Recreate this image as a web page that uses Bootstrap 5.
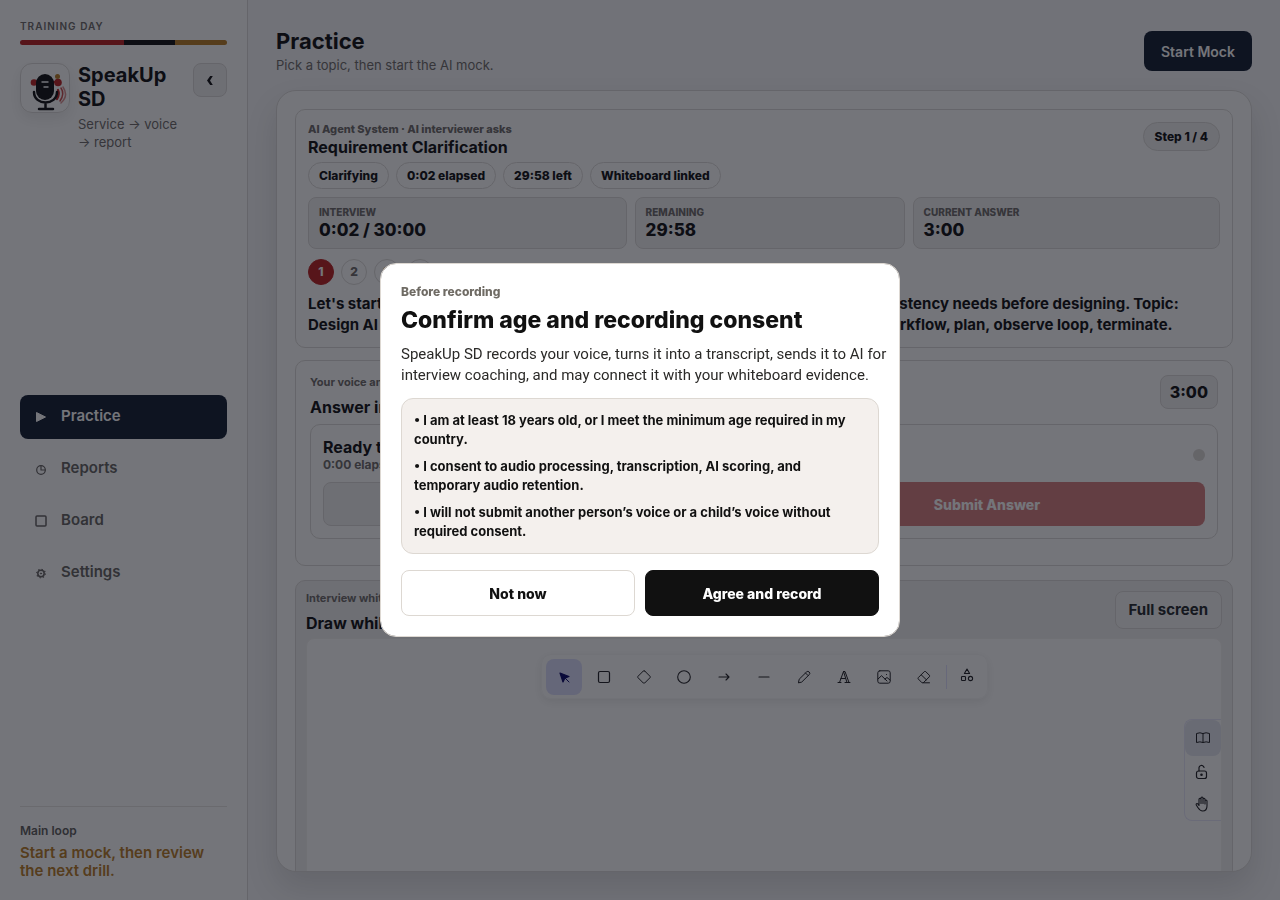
<!DOCTYPE html>
<html lang="en">
<head>
<meta charset="utf-8">
<meta name="viewport" content="width=device-width, initial-scale=1">
<title>SpeakUp SD – Practice</title>
<link href="https://cdn.jsdelivr.net/npm/bootstrap@5.3.0/dist/css/bootstrap.min.css" rel="stylesheet">
<style>
:root { --ink:#0a0a0c; --muted:#6b6866; --line:#dcdad8; --soft:#f1f0f1; --navy:#0d182d; --red:#b91c1c; --gold:#b7791f; }
body { font-family: Inter, "Liberation Sans", sans-serif; color: var(--ink); font-size: 13px; background:#f7f7f9; }
svg { display:block; }
.line-icon { fill:none; stroke:currentColor; stroke-linecap:round; stroke-linejoin:round; }
.app-shell { height:100vh; }
.side { width:248px; padding:20px; background:#fff; border-right:1px solid var(--line); }
.kicker { font-size:10px; line-height:12px; letter-spacing:1px; color:var(--muted); font-weight:600; }
.stripe { height:5px; }
.stripe .half { flex:2; background:var(--red); }
.stripe .dark { flex:1; background:var(--ink); }
.stripe .gold { flex:1; background:var(--gold); }
.brand-row { margin:18px 0 32px; }
.logo { width:50px; height:50px; border:1px solid var(--line); border-radius:12px; box-shadow:0 6px 14px rgba(0,0,0,.08); }
.brand { font-size:20px; line-height:24px; font-weight:700; margin:0; }
.brand-sub { font-size:13px; line-height:18px; color:var(--muted); margin-top:4px; }
.collapse-btn { width:34px; height:34px; border:1px solid var(--line); border-radius:8px; background:var(--soft); color:var(--ink); }
.side-nav { gap:8px; }
.side-nav .nav-link { height:44px; padding:0 14px; gap:13px; border-radius:8px; font-size:15px; font-weight:600; color:#625f5e; }
.side-nav .nav-link.active { background:var(--navy); color:#fff; }
.side-foot { border-top:1px solid #e6e4e2; padding-top:16px; }
.side-foot .cap { font-size:12px; line-height:16px; font-weight:600; color:#5c5a58; }
.side-foot .tip { font-size:15px; line-height:18px; font-weight:600; color:var(--gold); margin-top:5px; }
.main-col { padding:28px; }
.page-title { font-size:22px; line-height:26px; font-weight:700; margin:0; }
.page-sub { font-size:13px; line-height:18px; color:var(--muted); margin-top:2px; }
.btn-navy, .btn-navy:hover { background:var(--navy); color:#fff; height:40px; padding:0 17px; border:0; border-radius:8px; font-size:14px; font-weight:600; }
.stage { background:#fff; border:1px solid var(--line); border-radius:20px; padding:18px; box-shadow:0 16px 32px rgba(0,0,0,.12); overflow:hidden; }
.panel { border:1px solid var(--line); border-radius:10px; background:#fff; }
.label-sm { font-size:11px; line-height:14px; font-weight:700; color:var(--muted); }
.title-md { font-size:16px; line-height:20px; font-weight:700; margin:0; }
.question { padding:12px; margin-bottom:12px; }
.question .label-sm { font-weight:800; }
.question .title-md { line-height:22px; }
.chips { gap:7px; margin-top:4px; }
.chip { height:27px; padding:0 10px; border:1px solid var(--line); border-radius:14px; font-size:12px; font-weight:800; }
.chip-soft { height:29px; padding:0 11px; background:var(--soft); border-radius:15px; }
.stat { height:52px; padding:8px 10px; border:1px solid var(--line); border-radius:8px; background:var(--soft); }
.stat dt { font-size:10px; line-height:13px; font-weight:800; color:var(--muted); text-transform:uppercase; }
.stat dd { font-size:17px; line-height:22px; font-weight:800; margin:0; }
.steps { gap:7px; margin:10px 0 8px; }
.dot-step { width:26px; height:26px; border:1px solid var(--line); border-radius:50%; font-size:12px; font-weight:800; color:var(--muted); }
.dot-step.on { background:var(--red); border-color:var(--red); color:#fff; }
.prompt { font-size:15px; line-height:21px; font-weight:700; margin:0; }
.answer { padding:14px 14px 26px; margin-bottom:14px; }
.timer { height:34px; padding:0 9px; border:1px solid var(--line); border-radius:8px; background:var(--soft); font-size:16px; font-weight:800; }
.recorder { padding:12px; margin-top:7px; }
.recorder-head { margin-bottom:9px; }
.recorder .elapsed { font-size:12px; line-height:16px; }
.idle-dot { width:12px; height:12px; background:#dcd8d4; }
.act { height:44px; border-radius:8px; font-size:14px; font-weight:800; flex:1 1 0; }
.act-soft { background:var(--soft); border:1px solid var(--line); }
.act-red:disabled { background:var(--red); color:#fff; border:0; opacity:.57; }
.whiteboard { background:var(--soft); padding:10px; }
.whiteboard .title-md { margin-top:8px; }
.full-btn { height:38px; padding:0 13px; border:1px solid var(--line); border-radius:8px; font-size:15px; font-weight:700; background:#f6f6f6; }
.board { background:#fff; border:1px solid #f4f2f1; border-radius:8px; height:520px; padding-top:15px; margin-top:5px; }
.tools { height:45px; padding:4px; gap:4px; border-radius:10px; border:1px solid #f8f8f8; box-shadow:0 3px 10px rgba(0,0,0,.08); }
.tool { width:36px; height:36px; border:0; border-radius:8px; background:none; color:#1b1b1f; padding:0; }
.tool.more { width:32px; }
.tool.picked { background:#dcddfc; color:#030064; }
.tool-sep { width:1px; height:24px; background:#e0dfff; }
.dock { right:0; top:80px; width:37px; border:1px solid #e8e7fb; border-right:0; border-radius:8px 0 0 8px; }
.dock button { height:32px; border:0; background:none; color:#1b1b1f; padding:0 3px 0 0; }
.dock button:first-child { height:36px; background:#e4e6f1; border-radius:8px; padding:0; }
.scrim { background:rgba(15,17,26,.58); }
.consent { max-width:520px; }
.consent .modal-content { border:1px solid #ddd8d2; border-radius:16px; padding:20px; color:#111; }
.consent .cap { font-size:12px; line-height:16px; font-weight:800; color:#6f6b64; }
.consent h2 { font-size:23px; line-height:28px; font-weight:800; margin:6px 0 10px; }
.consent .lead-in { font-family:Roboto, Inter, sans-serif; font-size:15px; line-height:21px; margin:0 -8px 12px 0; color:#2b2a28; }
.terms { border:1px solid #ddd8d2; border-radius:12px; background:#f4f0ed; padding:12px; margin:0 0 16px; font-size:13px; line-height:19px; font-weight:700; }
.terms li + li { margin-top:8px; }
.choices { gap:10px; }
.choice, .choice:hover { height:46px; border-radius:8px; font-size:14px; font-weight:800; border:1px solid #ddd8d2; background:#fff; color:#111; }
.choice.go, .choice.go:hover { background:#111; border-color:#111; color:#fff; }
</style>
</head>
<body class="overflow-hidden">
<div class="app-shell d-flex">
  <aside class="side d-flex flex-column flex-shrink-0">
    <div>
      <div class="kicker">TRAINING DAY</div>
      <div class="stripe d-flex rounded-pill overflow-hidden mt-2"><span class="half"></span><span class="dark"></span><span class="gold"></span></div>
    </div>
    <div class="brand-row d-flex align-items-start gap-2">
      <div class="logo flex-shrink-0">
        <svg width="48" height="48" viewBox="0 0 48 48">
          <circle cx="13" cy="18.500" r="3.300" fill="#b91c1c"/><circle cx="37" cy="18.500" r="3.800" fill="#b91c1c"/><circle cx="36.500" cy="12.500" r="2.500" fill="#b7791f"/>
          <path d="M14 18h22" stroke="#b91c1c" stroke-width="2"/>
          <g class="line-icon" stroke-width="1.500" style="color:#b91c1c"><path d="M37 26q2 4-1 9" stroke-width="2.200"/><path d="M40 24q4 6-1 13" opacity=".8"/><path d="M42 23q6 9-2 16" opacity=".5"/></g>
          <rect x="15" y="10" width="18" height="26" rx="9" fill="#0a0a0c"/>
          <path d="M20.500 18h7M22.500 23h5" stroke="#fff" stroke-width="1.500"/>
          <path d="M13 28c0 14 23 14 23 0M24.500 39v6M18 45h14" fill="none" stroke="#0a0a0c" stroke-width="2.500" stroke-linecap="round"/>
        </svg>
      </div>
      <div class="flex-grow-1">
        <h2 class="brand">SpeakUp SD</h2>
        <div class="brand-sub">Service → voice → report</div>
      </div>
      <button class="collapse-btn flex-shrink-0 d-flex align-items-center justify-content-center p-0" type="button" aria-label="Collapse sidebar">
        <svg width="10" height="16" viewBox="0 0 10 16"><path d="M7.800 4H5.200L2 8.500 5.200 13h2.600L5 8.500z" fill="currentColor"/></svg>
      </button>
    </div>
    <nav class="side-nav nav flex-column my-auto">
      <a class="nav-link active d-flex align-items-center" href="#"><svg width="14" height="14" viewBox="0 0 14 14"><path d="M2.500 2.500v9l9-4.500z" fill="currentColor" stroke="currentColor" stroke-linejoin="round"/></svg>Practice</a>
      <a class="nav-link d-flex align-items-center" href="#"><svg class="line-icon" width="14" height="14" viewBox="0 0 14 14" stroke-width="1.200"><circle cx="7" cy="8" r="4.300"/><path d="M7 3.700V8h4.300"/></svg>Reports</a>
      <a class="nav-link d-flex align-items-center" href="#"><svg class="line-icon" width="14" height="14" viewBox="0 0 14 14" stroke-width="1.500"><rect x="2" y="2" width="10" height="10" rx="1"/></svg>Board</a>
      <a class="nav-link d-flex align-items-center" href="#"><svg class="line-icon" width="14" height="14" viewBox="0 0 14 14"><circle cx="7" cy="7.500" r="3.200" stroke-width="1.500"/><circle cx="7" cy="7.500" r=".6" fill="currentColor"/><circle cx="7" cy="7.500" r="4.300" stroke-width="1.200" stroke-dasharray="1.300 2.080" stroke-linecap="butt"/></svg>Settings</a>
    </nav>
    <div class="side-foot">
      <div class="cap">Main loop</div>
      <div class="tip">Start a mock, then review the next drill.</div>
    </div>
  </aside>

  <main class="main-col d-flex flex-column flex-grow-1">
    <header class="d-flex justify-content-between align-items-center mb-3">
      <div>
        <h1 class="page-title">Practice</h1>
        <div class="page-sub">Pick a topic, then start the AI mock.</div>
      </div>
      <button class="btn btn-navy" type="button">Start Mock</button>
    </header>

    <div class="stage flex-grow-1">
      <section class="panel question">
        <div class="d-flex justify-content-between align-items-start">
          <div>
            <div class="label-sm">AI Agent System · AI interviewer asks</div>
            <h2 class="title-md">Requirement Clarification</h2>
            <div class="chips d-flex">
              <span class="chip d-flex align-items-center">Clarifying</span>
              <span class="chip d-flex align-items-center">0:02 elapsed</span>
              <span class="chip d-flex align-items-center">29:58 left</span>
              <span class="chip d-flex align-items-center">Whiteboard linked</span>
            </div>
          </div>
          <span class="chip chip-soft d-flex align-items-center">Step 1 / 4</span>
        </div>
        <dl class="d-flex gap-2 mt-2 mb-0">
          <div class="stat flex-fill"><dt>Interview</dt><dd>0:02 / 30:00</dd></div>
          <div class="stat flex-fill"><dt>Remaining</dt><dd>29:58</dd></div>
          <div class="stat flex-fill"><dt>Current answer</dt><dd>3:00</dd></div>
        </dl>
        <div class="steps d-flex">
          <span class="dot-step on d-flex align-items-center justify-content-center">1</span>
          <span class="dot-step d-flex align-items-center justify-content-center">2</span>
          <span class="dot-step d-flex align-items-center justify-content-center">3</span>
          <span class="dot-step d-flex align-items-center justify-content-center">4</span>
        </div>
        <p class="prompt">Let's start with requirements. Clarify usage, scale, latency, availability, and consistency needs before designing. Topic: Design AI Agent System. Cover the core agent loop: user goal, tools, memory, workflow, plan, observe loop, terminate.</p>
      </section>

      <section class="panel answer">
        <div class="d-flex justify-content-between align-items-start">
          <div>
            <div class="label-sm">Your voice answer</div>
            <h2 class="title-md mt-2">Answer in your own words</h2>
          </div>
          <span class="timer d-flex align-items-center">3:00</span>
        </div>
        <div class="panel recorder">
          <div class="recorder-head d-flex justify-content-between align-items-center">
            <div>
              <h3 class="title-md">Ready to record</h3>
              <div class="label-sm elapsed">0:00 elapsed</div>
            </div>
            <span class="idle-dot rounded-circle"></span>
          </div>
          <div class="d-flex gap-2">
            <button class="btn act act-soft" type="button">Record</button>
            <button class="btn act act-red" type="button" disabled>Submit Answer</button>
          </div>
        </div>
      </section>

      <section class="panel whiteboard">
        <div class="d-flex justify-content-between align-items-start">
          <div>
            <div class="label-sm">Interview whiteboard</div>
            <h2 class="title-md">Draw while you talk</h2>
          </div>
          <button class="btn full-btn" type="button">Full screen</button>
        </div>
        <div class="board position-relative d-flex justify-content-center align-items-start">
          <div class="tools d-flex align-items-center">
            <button class="tool picked" aria-label="Selection"><svg class="line-icon mx-auto" width="20" height="20" viewBox="0 0 20 20"><path d="M6 6l3 9 1.800-3.800L15 9.500z" fill="currentColor" stroke-width="1.200"/><path d="M11 11l4 4" stroke-width="1"/></svg></button>
            <button class="tool" aria-label="Rectangle"><svg class="line-icon mx-auto" width="20" height="20" viewBox="0 0 20 20" stroke-width="1.200"><rect x="4.500" y="4.500" width="11" height="11" rx="1.500"/></svg></button>
            <button class="tool" aria-label="Diamond"><svg class="line-icon mx-auto" width="20" height="20" viewBox="0 0 20 20" stroke-width="1"><path d="M10.700 4l5.300 5.300q.7.700 0 1.400L10.700 16q-.7.700-1.400 0L4 10.700q-.7-.7 0-1.400L9.300 4q.7-.7 1.400 0z"/></svg></button>
            <button class="tool" aria-label="Ellipse"><svg class="line-icon mx-auto" width="20" height="20" viewBox="0 0 20 20" stroke-width="1.100"><circle cx="10" cy="10" r="6.300"/></svg></button>
            <button class="tool" aria-label="Arrow"><svg class="line-icon mx-auto" width="20" height="20" viewBox="0 0 20 20" stroke-width="1.100"><path d="M5 10h10M12 7l3 3-3 3"/></svg></button>
            <button class="tool" aria-label="Line"><svg class="line-icon mx-auto" width="20" height="20" viewBox="0 0 20 20" stroke-width="1.200"><path d="M5 10h10"/></svg></button>
            <button class="tool" aria-label="Draw"><svg class="line-icon mx-auto" width="20" height="20" viewBox="0 0 20 20" stroke-width="1"><path d="M4.500 15.500l.7-3.300L12.500 5a1.900 1.900 0 0 1 2.700 2.700L8 14.800zM11.500 6L14 8.500"/></svg></button>
            <button class="tool" aria-label="Text"><svg class="line-icon mx-auto" width="20" height="20" viewBox="0 0 20 20" stroke-width="1"><path d="M4 15.500h3M11 15.500h5M5.500 15.500L9.500 4.500h1.500l4 11M9.500 4.500l3.500 11M7 11.500h4.500"/></svg></button>
            <button class="tool" aria-label="Image"><svg class="line-icon mx-auto" width="20" height="20" viewBox="0 0 20 20" stroke-width="1"><rect x="3.800" y="3.800" width="12.400" height="12.400" rx="2"/><path d="M4 12l3.500-3.300L13 14M11 12l2-1.500 3 2.500M12.500 7.500h.1"/></svg></button>
            <button class="tool" aria-label="Eraser"><svg class="line-icon mx-auto" width="20" height="20" viewBox="0 0 20 20" stroke-width="1"><path d="M15.500 15.800H8L4.300 12q-.6-.7 0-1.400l6-6q.7-.6 1.400 0l3.700 3.700q.6.700 0 1.400l-6 6M7.200 7.800l5.200 5"/></svg></button>
            <span class="tool-sep"></span>
            <button class="tool more" aria-label="More shapes"><svg class="line-icon mx-auto mb-1" width="20" height="20" viewBox="0 0 20 20" stroke-width="1.100"><path d="M10 4l2.600 4.500H7.400z"/><rect x="4.500" y="11.500" width="4" height="4" rx=".8"/><circle cx="13.500" cy="13.500" r="2.100"/></svg></button>
          </div>
          <div class="dock position-absolute d-flex flex-column">
            <button aria-label="Library"><svg class="line-icon mx-auto" width="18" height="18" viewBox="0 0 18 18" stroke-width="1"><path d="M9 4.500q-3-1.500-6.500 0v9q3.500-1.300 6.500 0 3-1.300 6.500 0v-9Q12 3 9 4.500v9"/></svg></button>
            <button aria-label="Lock"><svg class="line-icon mx-auto" width="18" height="18" viewBox="0 0 18 18" stroke-width="1.200"><rect x="3.500" y="8" width="10" height="7.500" rx="2"/><path d="M6 8V5.500a2.500 2.500 0 0 1 5-1"/><circle cx="8.500" cy="11.700" r=".7"/></svg></button>
            <button aria-label="Hand"><svg class="line-icon mx-auto" width="18" height="18" viewBox="0 0 18 18" stroke-width="1.100"><path d="M6 10.500V4.300a1 1 0 0 1 2 0V8.500M8 8V3a1 1 0 0 1 2 0v5.500M10 8V4.300a1 1 0 0 1 2 0V9M12 8V6a1 1 0 0 1 2 0v5c0 3-1.700 5-4.300 5C7 16 6.300 14.800 5 12.700L3.300 10q-.5-1.400.8-1.500.8 0 1.900 2"/></svg></button>
          </div>
        </div>
      </section>
    </div>
  </main>
</div>

<div class="modal scrim d-block" tabindex="-1" role="dialog" aria-modal="true" aria-labelledby="consentTitle">
  <div class="modal-dialog modal-dialog-centered consent">
    <div class="modal-content">
      <div class="cap">Before recording</div>
      <h2 id="consentTitle">Confirm age and recording consent</h2>
      <p class="lead-in">SpeakUp SD records your voice, turns it into a transcript, sends it to AI for interview coaching, and may connect it with your whiteboard evidence.</p>
      <ul class="terms list-unstyled">
        <li>• I am at least 18 years old, or I meet the minimum age required in my country.</li>
        <li>• I consent to audio processing, transcription, AI scoring, and temporary audio retention.</li>
        <li>• I will not submit another person’s voice or a child’s voice without required consent.</li>
      </ul>
      <div class="choices d-flex">
        <button class="btn choice w-50" type="button">Not now</button>
        <button class="btn choice go w-50" type="button">Agree and record</button>
      </div>
    </div>
  </div>
</div>
<script src="https://cdn.jsdelivr.net/npm/bootstrap@5.3.0/dist/js/bootstrap.bundle.min.js"></script>
</body>
</html>
